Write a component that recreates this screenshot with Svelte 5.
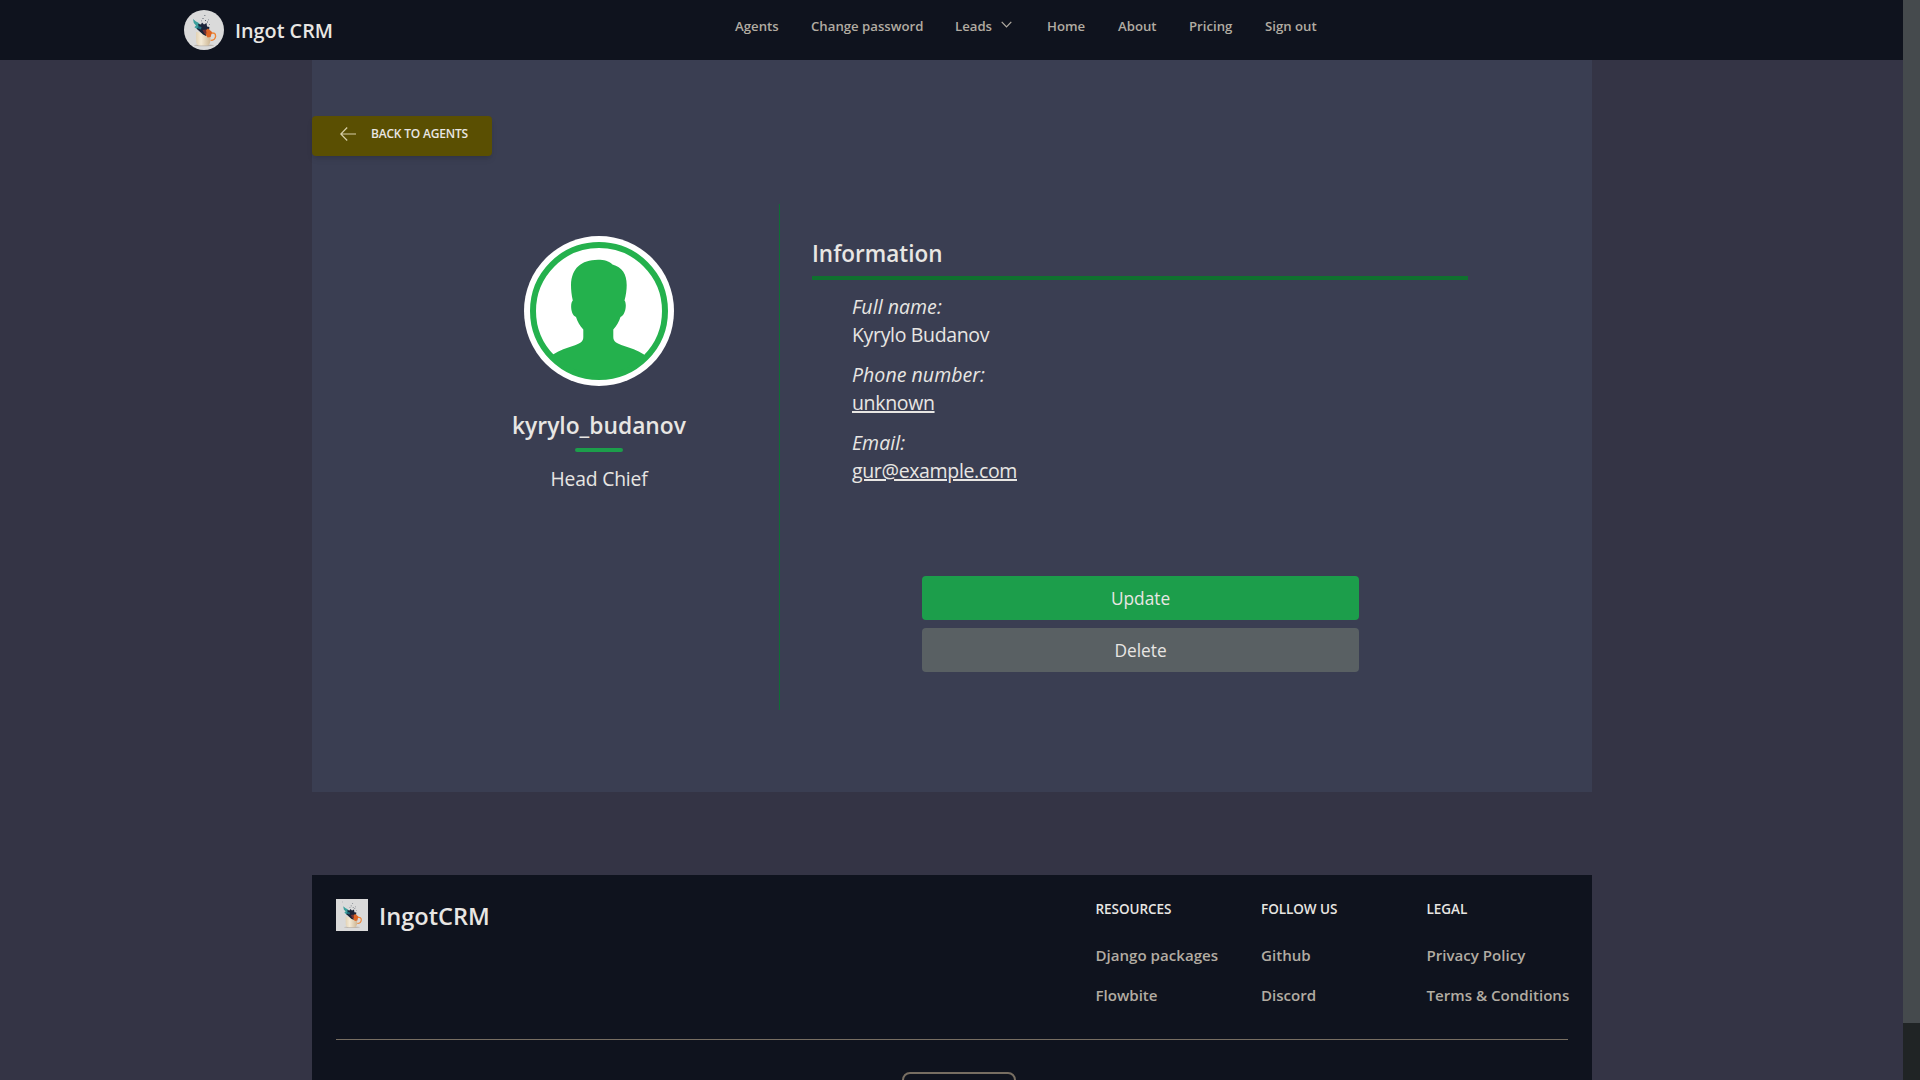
<script lang="ts">
  const navLinks = [
    { label: "Agents" },
    { label: "Change password" },
    { label: "Leads", dropdown: true },
    { label: "Home" },
    { label: "About" },
    { label: "Pricing" },
    { label: "Sign out" },
  ];

  const agent = {
    username: "kyrylo_budanov",
    position: "Head Chief",
    fullName: "Kyrylo Budanov",
    phone: "unknown",
    email: "gur@example.com",
  };

  const footerColumns = [
    { title: "Resources", links: ["Django packages", "Flowbite"] },
    { title: "Follow us", links: ["Github", "Discord"] },
    { title: "Legal", links: ["Privacy Policy", "Terms & Conditions"] },
  ];
</script>

{#snippet logo()}
  <svg class="logo" viewBox="0 0 40 40" aria-hidden="true">
    <defs>
      <linearGradient id="cup" x1="0" y1="0" x2="1" y2="0">
        <stop offset="0" stop-color="#e2d2b4" />
        <stop offset="0.35" stop-color="#f4ead6" />
        <stop offset="1" stop-color="#ccb592" />
      </linearGradient>
    </defs>
    <rect width="40" height="40" fill="#dadada" />
    <ellipse cx="20" cy="35.4" rx="10" ry="0.9" fill="#b9b2aa" />
    <path d="M12 22 L26.6 24 L26.2 32 Q25.6 35.4 23 35.4 L15.6 35.4 Q12.6 35.4 12.2 32 Z" fill="url(#cup)" />
    <path d="M27 23.2 Q31.6 22.2 31.6 26.2 Q31.2 30.4 26.6 30.4" fill="none" stroke="#ee8434" stroke-width="1.4" />
    <path d="M9 9 L12 11.5 L14 12.5 L17 15 L17 21 L14 19.6 L10.4 17.2 L12 15.6 L9.8 13 Z" fill="#3b9f9c" />
    <path d="M14 14 L17 14.5 L18 12.5 L20 14.5 L22.5 13 L23 16.5 L25.4 17 L25 21 L22 26 L19 24.6 L14 20 L12.5 18.6 L15 17.5 Z" fill="#1a2338" />
    <path d="M14 16 L17.5 17 L17 19.5 L13.5 18.4 Z" fill="#226d7d" />
    <path d="M20 21.5 L24 18.6 L28 22 L26.6 27 L23.5 27.5 Z" fill="#dd6424" />
    <path d="M18.5 20 L22 19.4 L22.5 23.5 L20.5 24 Z" fill="#6d3034" />
    <path d="M18.5 8h1v1h-1zM21 10h1v1h-1zM20.4 5h.9v.9h-.9zM24 9.4h.8v.8h-.8zM17 10.4h.8v.8h-.8zM23 11.6h1v1h-1zM8 3.4h.7v.7H8zM25 14h.8v.8h-.8z" fill="#59616c" />
  </svg>
{/snippet}

<div class="window">
  <div class="page">
    <header class="navbar">
      <a class="brand" href="#home">
        {@render logo()}
        <span>Ingot CRM</span>
      </a>
      <nav class="nav-links">
        {#each navLinks as link}
          <a href="#nav">
            {link.label}
            {#if link.dropdown}
              <svg class="chevron" viewBox="0 0 11 7" width="11" height="7">
                <path d="M.7.8 5.5 5.8 10.3.8" />
              </svg>
            {/if}
          </a>
        {/each}
      </nav>
    </header>

    <main class="panel">
      <a class="back-btn" href="#agents">
        <svg viewBox="0 0 16 14" width="16" height="14">
          <path d="M16 7H.8M7.2.5.8 7l6.4 6.5" />
        </svg>
        <span>Back to agents</span>
      </a>

      <div class="profile">
        <section class="identity">
          <svg class="avatar" viewBox="0 0 150 150">
            <defs>
              <clipPath id="face"><circle cx="75" cy="75" r="65" /></clipPath>
            </defs>
            <circle cx="75" cy="75" r="75" fill="#fff" />
            <g clip-path="url(#face)">
              <path
                fill="#24b14d"
                d="M74 23.7 C80 23.7 85 25 88.5 28.5 C98 31 102.7 38 102.7 49 C102.7 54 102 59 100.5 64.5 C103 67 102 79 96.5 81 C95 86 92.5 90 89.3 93.5 V101 C89.3 106 93 107 98 109.3 C106 112 114 114.5 120 118.5 V150 H29 V118.5 C35 114.5 43 112 51 109.3 C56 107 59.3 106 59.3 101 V93.5 C56 90 53.5 86 52 81 C46.5 79 46 67 48.8 64.5 C47.5 59 47 54 47 49 C47.5 32 57 24 74 23.7 Z"
              />
            </g>
            <circle cx="75" cy="75" r="66" fill="none" stroke="#24b14d" stroke-width="6" />
          </svg>
          <h2>{agent.username}</h2>
          <div class="accent"></div>
          <p>{agent.position}</p>
        </section>

        <section class="details">
          <h2>Information</h2>
          <div class="rule"></div>
          <dl>
            <dt>Full name:</dt>
            <dd>{agent.fullName}</dd>
            <dt>Phone number:</dt>
            <dd><a href="#phone">{agent.phone}</a></dd>
            <dt>Email:</dt>
            <dd><a href="#email">{agent.email}</a></dd>
          </dl>
          <div class="actions">
            <button class="update">Update</button>
            <button class="delete">Delete</button>
          </div>
        </section>
      </div>
    </main>

    <footer class="footer">
      <div class="footer-top">
        <a class="footer-brand" href="#home">
          {@render logo()}
          <span>IngotCRM</span>
        </a>
        <div class="footer-columns">
          {#each footerColumns as column}
            <div>
              <h3>{column.title}</h3>
              <ul>
                {#each column.links as link}
                  <li><a href="#footer">{link}</a></li>
                {/each}
              </ul>
            </div>
          {/each}
        </div>
      </div>
      <hr />
      <div class="footer-box"></div>
    </footer>
  </div>

  <div class="scrollbar"><div class="thumb"></div></div>
</div>

<style>
  :global(body) {
    margin: 0;
    overflow: hidden;
    background: #343445;
  }

  .window {
    display: flex;
    height: 1080px;
    overflow: hidden;
    font-family: "Open Sans", "Noto Sans", sans-serif;
    color: #e8e6e3;
  }

  .window *,
  .window {
    box-sizing: border-box;
  }

  a {
    color: inherit;
    text-decoration: none;
  }

  h2,
  h3,
  p,
  dl,
  dd,
  ul {
    margin: 0;
    padding: 0;
  }

  svg {
    display: block;
    flex: none;
  }

  .page {
    width: 1903px;
    height: 1080px;
    overflow: hidden;
    background: #343445;
  }

  .scrollbar {
    width: 17px;
    background: #202425;
  }

  .thumb {
    height: 1023px;
    background: #454a4d;
  }

  /* navbar */
  .navbar {
    display: flex;
    height: 60px;
    padding-left: 184px;
    background: #0f131e;
  }

  .brand {
    display: flex;
    align-items: center;
    gap: 11px;
    width: 550px;
    font-size: 19.8px;
    font-weight: 600;
    white-space: nowrap;
  }

  .brand .logo {
    width: 40px;
    height: 40px;
    border-radius: 50%;
  }

  .nav-links {
    display: grid;
    grid-template-columns: 76px 144px 92px 71px 71px 76px 60px;
    padding-left: 1px;
    padding-top: 16px;
    font-size: 13.2px;
    font-weight: 600;
    line-height: 20px;
    color: #b2aca2;
    white-space: nowrap;
  }

  .nav-links a {
    display: flex;
  }

  .chevron {
    margin: 5px 0 0 9px;
    fill: none;
    stroke: currentColor;
    stroke-width: 1.2;
  }

  /* agent panel */
  .panel {
    width: 1280px;
    height: 732px;
    margin: 0 0 83px 312px;
    padding-top: 56px;
    background: #3a3e52;
  }

  .back-btn {
    display: flex;
    width: 180px;
    height: 40px;
    padding: 11px 0 0 28px;
    border-radius: 4px;
    background: #5a4f02;
    box-shadow: 0 4px 6px -1px rgba(0, 0, 0, 0.1), 0 2px 4px -2px rgba(0, 0, 0, 0.1);
    font-size: 12px;
    font-weight: 600;
    letter-spacing: -0.2px;
    line-height: 13px;
    text-transform: uppercase;
    white-space: nowrap;
  }

  .back-btn svg {
    margin-right: 15px;
    fill: none;
    stroke: #d8d0a8;
    stroke-width: 1.2;
  }

  .profile {
    display: flex;
    margin: 48px 0 0 107px;
  }

  .identity {
    display: flex;
    flex-direction: column;
    align-items: center;
    width: 360px;
    padding-top: 32px;
  }

  .avatar {
    width: 150px;
    height: 150px;
  }

  h2 {
    font-size: 22.5px;
    font-weight: 600;
    line-height: 32px;
  }

  .identity h2 {
    margin-top: 24px;
    font-size: 22.8px;
  }

  .accent {
    width: 48px;
    height: 4px;
    margin: 6px 0 13px;
    border-radius: 2px;
    background: #1c9e4b;
  }

  .identity p {
    font-size: 19.3px;
    line-height: 28px;
    letter-spacing: -0.15px;
  }

  .details {
    width: 690px;
    height: 506px;
    padding: 34px 0 0 32px;
    border-left: 1px solid #106c35;
  }

  .rule {
    width: 656px;
    height: 4px;
    margin-top: 6px;
    background: #0f702f;
    box-shadow: 0 10px 15px -3px rgba(0, 0, 0, 0.1), 0 4px 6px -4px rgba(0, 0, 0, 0.1);
  }

  dl {
    padding: 13px 0 0 40px;
    font-size: 19.5px;
    line-height: 28px;
  }

  dt {
    font-style: italic;
    letter-spacing: 0.05px;
  }

  dd {
    margin-bottom: 12px;
    letter-spacing: -0.34px;
  }

  dd a {
    text-decoration: underline 2px;
    text-underline-offset: 1px;
  }

  .actions {
    display: flex;
    flex-direction: column;
    gap: 8px;
    width: 437px;
    margin: 91px 0 0 110px;
  }

  button {
    height: 44px;
    padding: 2px 0 0;
    border: 0;
    border-radius: 4px;
    font: 17.3px/28px "Open Sans", "Noto Sans", sans-serif;
    color: #e8e6e3;
  }

  .update {
    background: #1c9e4b;
  }

  .delete {
    background: #596063;
  }

  /* footer */
  .footer {
    width: 1280px;
    height: 300px;
    margin-left: 312px;
    padding: 24px 24px 0;
    background: #0f131e;
  }

  .footer-top {
    display: flex;
    height: 140px;
  }

  .footer-brand {
    display: flex;
    gap: 11px;
    width: 759.5px;
    font-size: 23.6px;
    font-weight: 600;
    line-height: 34px;
  }

  .footer-brand .logo {
    width: 32px;
    height: 32px;
  }

  .footer-columns {
    display: grid;
    grid-template-columns: 165.5px 165.5px 141.5px;
  }

  h3 {
    margin-bottom: 24px;
    font-size: 13.5px;
    font-weight: 600;
    line-height: 20px;
    letter-spacing: -0.05px;
    text-transform: uppercase;
  }

  ul {
    list-style: none;
    font-size: 15.1px;
    font-weight: 600;
    line-height: 24px;
    color: #b2aca2;
    white-space: nowrap;
  }

  li {
    margin-bottom: 16px;
  }

  hr {
    height: 1px;
    margin: 0;
    border: 0;
    background: #776e62;
  }

  .footer-box {
    width: 114px;
    height: 44px;
    margin: 32px 0 0 566px;
    border: 2px solid #776e62;
    border-radius: 8px;
  }
</style>
